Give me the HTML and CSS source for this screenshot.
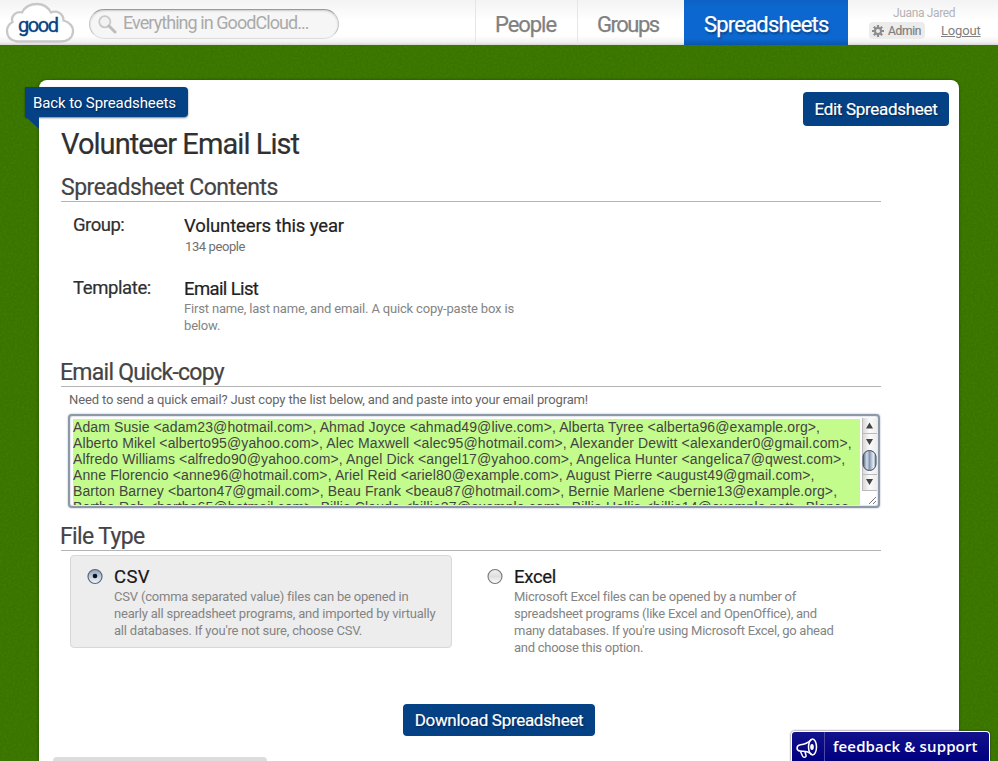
FILE: index.html
```
<!DOCTYPE html>
<html lang="en">
<head>
<meta charset="utf-8">
<title>Volunteer Email List</title>
<link rel="stylesheet" href="styles.css">
</head>
<body>
<svg class="grain" aria-hidden="true"><filter id="grain"><feTurbulence type="fractalNoise" baseFrequency="0.45" numOctaves="2" seed="4"/><feColorMatrix values="0 0 0 0 0.15  0 0 0 0 0.25  0 0 0 0 0  0.9 0 0 0 -0.3"/></filter><rect width="100%" height="100%" filter="url(#grain)"/></svg>
<header class="topbar">
  <a class="logo">
    <svg width="70" height="42" viewBox="0 0 70 42"><path d="M12 39.500C5.500 38.500 2 34.500 2 29C2 24.500 4 22 7.500 20C5.500 14.500 10.500 9 17 10.500C20 4.500 26 2 32 2C38 2 43 5 46 10.500C52 8 58.500 11.500 58.500 18.500C64.500 20 68.500 24.500 68 30C67.500 36 62.500 39.500 56 39.500Z" fill="#fff" stroke="#c8c8c8" stroke-width="2.300"/></svg>
    <span>good</span>
  </a>
  <div class="search">
    <svg width="19" height="19" viewBox="0 0 19 19"><circle cx="6.800" cy="6.800" r="5.600" fill="#f2f2f2" stroke="#c9c9c9" stroke-width="1.800"/><path d="M11 11l6 6" stroke="#bdbdbd" stroke-width="3" stroke-linecap="round"/></svg>
    <span>Everything in GoodCloud...</span>
  </div>
  <nav class="nav">
    <a class="people">People</a>
    <a class="groups">Groups</a>
    <a class="sheets active">Spreadsheets</a>
  </nav>
  <div class="account">
    <div class="user">Juana Jared</div>
    <div class="links">
      <a class="admin"><svg width="12" height="12" viewBox="0 0 12 12"><g stroke="#8c8c8c" stroke-width="2.200"><path d="M6 0v12M0 6h12M1.800 1.800l8.400 8.400M10.200 1.800l-8.400 8.400"/></g><circle cx="6" cy="6" r="4" fill="#8c8c8c"/><circle cx="6" cy="6" r="2" fill="#ececec"/></svg><span>Admin</span></a>
      <a class="logout">Logout</a>
    </div>
  </div>
</header>
<main class="panel">
  <a class="back">Back to Spreadsheets</a>
  <a class="btn edit">Edit Spreadsheet</a>
  <div class="content">
    <h1>Volunteer Email List</h1>
    <h2 class="h-contents">Spreadsheet Contents</h2>
    <dl>
      <div class="row">
        <dt class="t-group">Group:</dt>
        <dd><strong class="t-vol">Volunteers this year</strong><p class="count">134 people</p></dd>
      </div>
      <div class="row">
        <dt class="t-template">Template:</dt>
        <dd><strong class="t-email">Email List</strong><p>First name, last name, and email. A quick copy-paste box is<br>below.</p></dd>
      </div>
    </dl>
    <h2 class="h-copy">Email Quick-copy</h2>
    <p class="hint">Need to send a quick email? Just copy the list below, and and paste into your email program!</p>
    <div class="copybox">
      <div class="emails">Adam Susie &lt;adam23@hotmail.com&gt;, Ahmad Joyce &lt;ahmad49@live.com&gt;, Alberta Tyree &lt;alberta96@example.org&gt;,
Alberto Mikel &lt;alberto95@yahoo.com&gt;, Alec Maxwell &lt;alec95@hotmail.com&gt;, Alexander Dewitt &lt;alexander0@gmail.com&gt;,
Alfredo Williams &lt;alfredo90@yahoo.com&gt;, Angel Dick &lt;angel17@yahoo.com&gt;, Angelica Hunter &lt;angelica7@qwest.com&gt;,
Anne Florencio &lt;anne96@hotmail.com&gt;, Ariel Reid &lt;ariel80@example.com&gt;, August Pierre &lt;august49@gmail.com&gt;,
Barton Barney &lt;barton47@gmail.com&gt;, Beau Frank &lt;beau87@hotmail.com&gt;, Bernie Marlene &lt;bernie13@example.org&gt;,
Bertha Rob &lt;bertha65@hotmail.com&gt;, Billie Claude &lt;billie27@example.com&gt;, Billie Hollis &lt;billie14@example.net&gt;, Blanca</div>
      <svg class="scroll" width="15" height="87" viewBox="0 0 15 87">
        <defs>
          <linearGradient id="track"><stop offset="0" stop-color="#d4d4d4"/><stop offset=".5" stop-color="#fafafa"/><stop offset="1" stop-color="#eee"/></linearGradient>
          <linearGradient id="thumb"><stop offset="0" stop-color="#526078"/><stop offset=".3" stop-color="#d5dfec"/><stop offset=".5" stop-color="#8797ad"/><stop offset=".8" stop-color="#e2edf8"/><stop offset="1" stop-color="#77869c"/></linearGradient>
        </defs>
        <path d="M0 0h15v72H0z" fill="url(#track)"/>
        <path d="M0 15.500h15M0 56.500h15M0 72.500h15M.5 0v72" stroke="#bbb" fill="none"/>
        <path d="M4 10.500l3.500-6 3.500 6zM4 21l3.500 6 3.500-6zM4 61l3.500 6 3.500-6z" fill="#444"/>
        <rect x="1" y="32.500" width="13" height="20" rx="6.500" fill="url(#thumb)" stroke="#3f4c61"/>
        <path d="M7 86l7-7M11 86l3-3" stroke="#777"/>
      </svg>
    </div>
    <h2 class="h-file">File Type</h2>
    <div class="choices">
      <label class="choice selected">
        <svg class="radio" width="16" height="17" viewBox="0 0 16 17"><defs><linearGradient id="on" x2="0" y2="1"><stop offset="0" stop-color="#8e9fba"/><stop offset=".55" stop-color="#c4d1e2"/><stop offset="1" stop-color="#f4f9fd"/></linearGradient></defs><circle cx="8" cy="8.500" r="7" fill="url(#on)" stroke="#5b667a" stroke-width="1.200"/><circle cx="8" cy="8" r="2.300" fill="#111"/></svg>
        <div><strong class="t-csv">CSV</strong><p>CSV (comma separated value) files can be opened in<br>nearly all spreadsheet programs, and imported by virtually<br>all databases. If you're not sure, choose CSV.</p></div>
      </label>
      <label class="choice excel">
        <svg class="radio" width="16" height="17" viewBox="0 0 16 17"><defs><linearGradient id="off" x2="0" y2="1"><stop offset="0" stop-color="#f2f2f2"/><stop offset=".5" stop-color="#dedede"/><stop offset="1" stop-color="#fff"/></linearGradient></defs><circle cx="8" cy="8.500" r="7" fill="url(#off)" stroke="#777" stroke-width="1.100"/></svg>
        <div><strong class="t-excel">Excel</strong><p>Microsoft Excel files can be opened by a number of<br>spreadsheet programs (like Excel and OpenOffice), and<br>many databases. If you're using Microsoft Excel, go ahead<br>and choose this option.</p></div>
      </label>
    </div>
  </div>
  <a class="btn download">Download Spreadsheet</a>
  <div class="footer-tab"></div>
</main>
<a class="feedback">
  <svg width="32" height="30" viewBox="0 0 32 30"><g fill="none" stroke="#fff" stroke-width="1.500" stroke-linejoin="round"><path d="M19.500 7.500C16.500 10.500 13 12.500 8.500 12.800C4 13.500 4 18.500 8 19L10 19.300C14 19 17 20 20 22.500"/><ellipse cx="20.500" cy="15" rx="4" ry="8"/><path d="M8.500 19.500l2 4.500c1 2 4 1.500 3.500-.8l-1-3.200"/></g><ellipse cx="20" cy="15" rx="1.800" ry="3" fill="#fff"/></svg>
  <span>feedback &amp; support</span>
</a>
</body>
</html>
```
FILE: styles.css
```
* { box-sizing: border-box; }
body {
  margin: 0;
  height: 761px;
  overflow: hidden;
  background: #377500;
  font-family: Roboto, "Liberation Sans", sans-serif;
  color: #333;
}
h1, h2, p, dl, dd { margin: 0; font-weight: 400; }
strong { font-weight: 400; display: block; }

.grain { position: absolute; inset: 0; width: 100%; height: 100%; z-index: -1; opacity: .55; }

.topbar {
  display: flex;
  height: 45px;
  background: linear-gradient(#f3f3f3 0, #fff 45%, #fff 80%, #f0f0f0 94%, #d5d5d5 100%);
}
.logo { position: relative; width: 70px; height: 42px; margin: 2px 0 0 5px; flex: none; }
.logo svg { display: block; }
.logo span {
  position: absolute; left: 13px; top: 10px;
  font-size: 20px; line-height: 26px; letter-spacing: -1.45px; color: #084284; -webkit-text-stroke: .4px #084284;
}
.search {
  display: flex; align-items: center;
  width: 250px; height: 30px; margin: 9px 0 0 14px; padding-left: 8px; flex: none;
  border: 1px solid #c4c4c4; border-top-color: #999; border-bottom-color: #ddd; border-radius: 15px;
  background: #f6f6f6; box-shadow: inset 0 1px 2px #ccc;
  color: #aaa; font-size: 18px; letter-spacing: -.94px; line-height: 26px;
}
.search span { margin: -2px 0 0 6px; white-space: nowrap; }
.nav { display: flex; margin-left: 136px; color: #808080; font-size: 22px; line-height: 49px; flex: none; -webkit-text-stroke: .25px; }
.nav a { border-left: 1px solid #e6e6e6; height: 45px; padding-left: 19px; }
.people { width: 102px; letter-spacing: -1.05px; }
.groups { width: 107px; letter-spacing: -1.5px; }
.nav .sheets {
  width: 164px; border: 0; letter-spacing: -.8px; color: #fff; padding-left: 20px;
  background: linear-gradient(#0d62c4, #0c68d0 20%, #0c68d0 85%, #0a56ae);
  text-shadow: 1px 2px 2px #084284;
}
.account { width: 150px; padding-top: 6px; color: #b3b3b3; font-size: 12px; }
.user { padding-left: 45px; line-height: 14px; letter-spacing: -.35px; }
.links { display: flex; margin-top: 2px; color: #808080; }
.admin {
  display: flex; align-items: center; width: 56px; height: 17px; margin-left: 21px; padding-left: 3px;
  background: #ececec; border-radius: 4px; letter-spacing: -.3px;
}
.admin span { margin-left: 4px; -webkit-text-stroke: .2px; }
.logout { margin-left: 16px; font-size: 13px; line-height: 17px; letter-spacing: -.17px; text-decoration: underline; }

.panel {
  position: relative;
  width: 920px; height: 681px; margin: 35px 0 0 39px; padding-top: 46px;
  background: #fff; border-radius: 8px 8px 0 0; box-shadow: 0 0 3px #204a00;
}
.back {
  position: absolute; left: -14px; top: 7px; width: 163px; height: 30px; padding-left: 8px;
  background: #044185; border-radius: 0 4px 4px 0; box-shadow: 0 1px 2px rgba(0, 0, 0, .5);
  color: #fff; font-size: 15px; line-height: 32px; letter-spacing: -.11px; text-shadow: 1px 1px 2px #002350;
}
.back::after {
  content: ""; position: absolute; left: 1px; top: 30px; width: 13px; height: 12px;
  background: #044185; clip-path: polygon(0 0, 100% 0, 100% 100%);
}
.btn {
  display: block; background: #044185; border-radius: 4px;
  color: #fff; font-size: 17px; letter-spacing: -.3px; text-align: center; text-shadow: 1px 1px 2px #002350;
  -webkit-text-stroke: .2px;
}
.edit { position: absolute; right: 10px; top: 12px; width: 146px; height: 34px; line-height: 35px; }

.content { width: 820px; margin-left: 22px; }
h1 { height: 48px; font-size: 29px; line-height: 36px; letter-spacing: -.93px; color: #303030; }
h2 { height: 28px; border-bottom: 1px solid #b4b4b4; font-size: 23px; line-height: 27px; color: #444; }
h1, h2, dt, strong { -webkit-text-stroke: .2px; }
.h-contents { letter-spacing: -.48px; }
.h-copy { letter-spacing: -.73px; text-indent: -1px; }
.h-file { letter-spacing: -.63px; margin-top: 15px; text-indent: -1px; }
dl { padding: 13px 0 0 12px; height: 157px; }
.row { display: flex; height: 63px; font-size: 18.5px; line-height: 22px; }
dt { width: 111px; margin-top: -1px; color: #303030; }
dd strong { height: 22px; color: #222; }
.t-group { letter-spacing: -.5px; }
.t-template { letter-spacing: -.39px; }
.t-vol { letter-spacing: -.13px; }
.t-email { letter-spacing: -.62px; }
dd p, .choice p { font-size: 13px; line-height: 17px; letter-spacing: -.17px; color: #848484; white-space: nowrap; }
dd .count { padding: 1px 0 0 1px; letter-spacing: -.4px; color: #707070; }
.hint { padding: 4px 0 0 8px; height: 27px; font-size: 13px; line-height: 17px; letter-spacing: -.14px; color: #666; }

.copybox {
  display: flex; width: 812px; height: 94px; margin-left: 7px; padding: 3px 1px 0 3px;
  background: #fff; border: 2px solid #8e99a8; border-radius: 4px;
  box-shadow: inset 0 0 2px #9daabb, 0 0 2px #9daabb;
}
.emails {
  width: 787px; height: 86px; overflow: hidden; background: #c3fb8d;
  font: 14px/16px "Liberation Sans", Arial, sans-serif; letter-spacing: .11px; color: #444; white-space: pre;
}
.scroll { margin: -1px 0 0 2px; }

.choices { display: flex; padding: 4px 0 0 9px; gap: 18px; }
.choice { display: flex; width: 382px; height: 93px; padding: 10px 0 0 16px; border: 1px solid transparent; border-radius: 4px; }
.selected { background: #ededed; border-color: #d8d8d8; }
.radio { margin: 2px 11px 0 0; flex: none; }
.choice strong { height: 22px; font-size: 18.5px; line-height: 22px; color: #181818; }
.choice p { letter-spacing: -.2px; }
.choice.excel p { letter-spacing: -.26px; }
.t-csv { letter-spacing: .4px; }
.t-excel { letter-spacing: -.3px; }
.download { width: 192px; height: 32px; margin: 56px 0 0 364px; line-height: 33px; }

.footer-tab { width: 214px; height: 4px; margin: 21px 0 0 14px; background: #dcdcdc; border-radius: 4px 4px 0 0; }

.feedback {
  position: absolute; right: 8px; bottom: 0; display: flex; width: 199px; height: 30px;
  background: linear-gradient(#12128c, #000080); border: 1px solid #fff; border-bottom: 0; border-radius: 4px 4px 0 0;
  box-shadow: 0 0 2px #223;
  color: #fff; font: 600 15px/29px "Open Sans", sans-serif; letter-spacing: .14px;
}
.feedback svg { border-right: 1px solid #4a4aa6; margin-right: 8px; flex: none; width: 33px; }
```
